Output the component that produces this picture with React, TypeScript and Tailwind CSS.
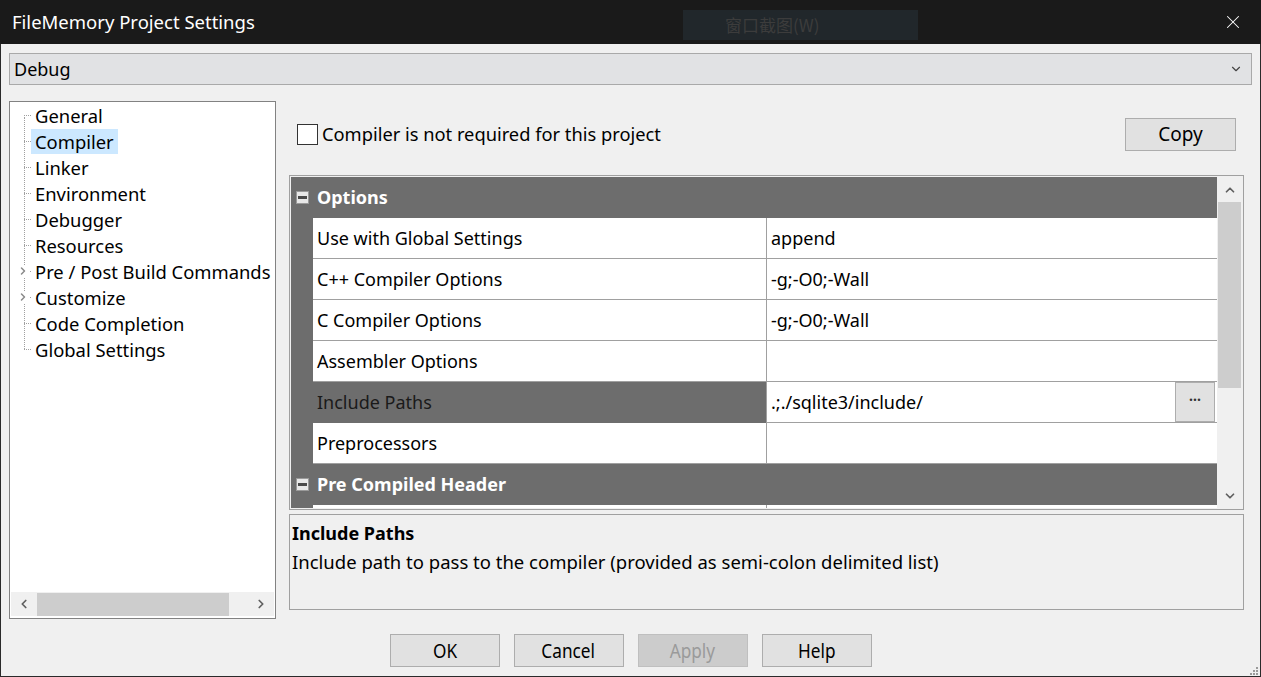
import { ChevronDown, ChevronUp, ChevronLeft, ChevronRight, X } from 'lucide-react'

const treeItems = [
  { label: 'General' },
  { label: 'Compiler', selected: true },
  { label: 'Linker' },
  { label: 'Environment' },
  { label: 'Debugger' },
  { label: 'Resources' },
  { label: 'Pre / Post Build Commands', expandable: true },
  { label: 'Customize', expandable: true },
  { label: 'Code Completion' },
  { label: 'Global Settings', last: true },
]

const optionRows = [
  { label: 'Use with Global Settings', value: 'append' },
  { label: 'C++ Compiler Options', value: '-g;-O0;-Wall' },
  { label: 'C Compiler Options', value: '-g;-O0;-Wall' },
  { label: 'Assembler Options', value: '' },
  { label: 'Include Paths', value: '.;./sqlite3/include/', selected: true },
  { label: 'Preprocessors', value: '' },
]

function MinusBox() {
  return (
    <span className="flex h-[13px] w-[13px] items-center justify-center border border-[#9a9a9a] bg-[#e8e8e8]">
      <span className="h-[3px] w-[9px] bg-[#4a4a4a]" />
    </span>
  )
}

function GroupHeader({ title }: { title: string }) {
  return (
    <div className="flex h-[41px] shrink-0 items-center gap-[8px] bg-[#6d6d6d] pl-[5px]">
      <MinusBox />
      <span className="text-[18px] font-bold text-white">{title}</span>
    </div>
  )
}

function Button({ children, disabled }: { children: string; disabled?: boolean }) {
  return (
    <button
      className={
        disabled
          ? 'flex h-[33px] w-[110px] items-center justify-center border border-[#bfbfbf] bg-[#cccccc] text-[20px] text-[#9a9a9a]'
          : 'flex h-[33px] w-[110px] items-center justify-center border border-[#adadad] bg-[#e1e1e1] text-[20px] text-black'
      }
    >
      <span className="inline-block scale-x-[0.86]">{children}</span>
    </button>
  )
}

export default function App() {
  return (
    <div className="flex h-[677px] w-[1261px] flex-col overflow-hidden bg-[#f0f0f0] font-['Noto_Sans',sans-serif] text-black">
      {/* title bar */}
      <div className="relative flex h-[44px] shrink-0 items-center bg-[#1a1a1a] pl-[12px] pr-[17px]">
        <span className="text-[18.5px] text-white">FileMemory Project Settings</span>
        <div className="absolute left-[683px] top-[10px] flex h-[30px] w-[235px] items-center bg-[#21272b] pl-[42px] font-['Noto_Sans_CJK_SC',sans-serif] text-[17px] text-[#3c3c3c]">
          窗口截图(W)
        </div>
        <X className="ml-auto h-[22px] w-[22px] text-white" strokeWidth={1.1} />
      </div>

      <div className="flex flex-1 flex-col border-x border-b border-[#2a2a2a] px-[8px] pb-[9px] pt-[9px]">
        {/* config dropdown */}
        <div className="flex h-[32px] shrink-0 items-center border border-[#a9a9a9] bg-[#e1e2e4] pl-[4px] pr-[8px]">
          <span className="text-[18px]">Debug</span>
          <ChevronDown className="ml-auto h-[14px] w-[14px] text-[#444]" strokeWidth={2} />
        </div>

        <div className="mt-[16px] flex gap-[13px]">
          {/* tree */}
          <div className="flex h-[518px] w-[267px] shrink-0 flex-col border border-[#828282] bg-white">
            <div className="relative flex-1">
              <div className="absolute left-[14px] top-[15px] h-[232px] border-l border-dotted border-[#a0a0a0]" />
              {treeItems.map((item) => (
                <div key={item.label} className="relative flex h-[26px] items-center">
                  <span className="ml-[14px] w-[7px] border-t border-dotted border-[#a0a0a0]" />
                  {item.expandable && (
                    <ChevronRight
                      className="absolute left-[7px] top-[7px] h-[12px] w-[12px] bg-white text-[#8a8a8a]"
                      strokeWidth={3}
                    />
                  )}
                  <span
                    className={
                      item.selected
                        ? 'bg-[#cce8ff] px-[4px] text-[18.4px] leading-[25px]'
                        : 'px-[4px] text-[18.4px] leading-[25px]'
                    }
                  >
                    {item.label}
                  </span>
                </div>
              ))}
            </div>
            {/* horizontal scrollbar */}
            <div className="mx-[1px] mb-[2px] flex h-[24px] items-center bg-[#f0f0f0]">
              <div className="flex w-[26px] justify-center">
                <ChevronLeft className="h-[14px] w-[14px] text-[#606060]" strokeWidth={3} />
              </div>
              <div className="h-[23px] w-[192px] bg-[#cdcdcd]" />
              <div className="ml-auto flex w-[26px] justify-center">
                <ChevronRight className="h-[14px] w-[14px] text-[#606060]" strokeWidth={3} />
              </div>
            </div>
          </div>

          {/* right panel */}
          <div className="flex w-[955px] flex-col">
            <div className="mt-[17px] flex h-[32px] items-center">
              <span className="ml-[8px] h-[21px] w-[21px] border border-[#333] bg-white" />
              <span className="ml-[4px] text-[18.3px]">Compiler is not required for this project</span>
              <div className="ml-auto mr-[8px] flex h-[33px] w-[111px] items-center justify-center border border-[#adadad] bg-[#e1e1e1] text-[19px]">
                Copy
              </div>
            </div>

            {/* property grid */}
            <div className="mt-[25px] flex h-[335px] border border-[#a0a0a0] bg-[#f0f0f0] p-[1px]">
              <div className="flex flex-1 flex-col overflow-hidden">
                <GroupHeader title="Options" />
                {optionRows.map((row) => (
                  <div key={row.label} className="flex h-[41px] shrink-0 bg-[#6d6d6d] pl-[22px]">
                    <div
                      className={
                        row.selected
                          ? 'flex w-[453px] items-center border-b border-[#6d6d6d] bg-[#6d6d6d] pl-[4px] text-[18px] text-[#1a1a1a]'
                          : 'flex w-[453px] items-center border-b border-[#a0a0a0] bg-white pl-[4px] text-[18px]'
                      }
                    >
                      {row.label}
                    </div>
                    <div className="flex flex-1 items-center border-b border-l border-[#a0a0a0] bg-white pl-[4px] text-[18px]">
                      <span className="flex-1">{row.value}</span>
                      {row.selected && (
                        <div className="mr-[2px] flex h-[40px] w-[40px] items-start justify-center border border-[#adadad] bg-[#e1e1e1] pt-[6px] text-[14px] font-bold leading-[14px] text-[#333]">
                          ...
                        </div>
                      )}
                    </div>
                  </div>
                ))}
                <GroupHeader title="Pre Compiled Header" />
                <div className="flex h-[41px] shrink-0 bg-[#6d6d6d] pl-[22px]">
                  <div className="w-[453px] bg-white" />
                  <div className="flex-1 border-l border-[#a0a0a0] bg-white" />
                </div>
              </div>
              {/* vertical scrollbar */}
              <div className="flex w-[25px] shrink-0 flex-col items-center bg-[#f0f0f0]">
                <div className="flex h-[25px] items-center">
                  <ChevronUp className="h-[14px] w-[14px] text-[#606060]" strokeWidth={3} />
                </div>
                <div className="h-[186px] w-[23px] bg-[#cdcdcd]" />
                <div className="mt-auto flex h-[25px] items-center">
                  <ChevronDown className="h-[14px] w-[14px] text-[#606060]" strokeWidth={3} />
                </div>
              </div>
            </div>

            {/* description */}
            <div className="mt-[4px] h-[96px] border border-[#a0a0a0] bg-[#f0f0f0] pl-[2px] pt-[6px]">
              <div className="text-[18px] font-bold leading-[24px]">Include Paths</div>
              <div className="mt-[5px] whitespace-nowrap text-[18.5px] leading-[24px]">
                Include path to pass to the compiler (provided as semi-colon delimited list)
              </div>
            </div>
          </div>
        </div>

        {/* bottom buttons */}
        <div className="relative mt-auto flex justify-center gap-[14px]">
          <Button>OK</Button>
          <Button>Cancel</Button>
          <Button disabled>Apply</Button>
          <Button>Help</Button>
          <div className="absolute -right-[6px] bottom-[-8px] grid grid-cols-3 gap-[1px]">
            <span />
            <span />
            <span className="h-[2px] w-[2px] bg-[#9a9a9a]" />
            <span />
            <span className="h-[2px] w-[2px] bg-[#9a9a9a]" />
            <span className="h-[2px] w-[2px] bg-[#9a9a9a]" />
            <span className="h-[2px] w-[2px] bg-[#9a9a9a]" />
            <span className="h-[2px] w-[2px] bg-[#9a9a9a]" />
            <span className="h-[2px] w-[2px] bg-[#9a9a9a]" />
          </div>
        </div>
      </div>
    </div>
  )
}
